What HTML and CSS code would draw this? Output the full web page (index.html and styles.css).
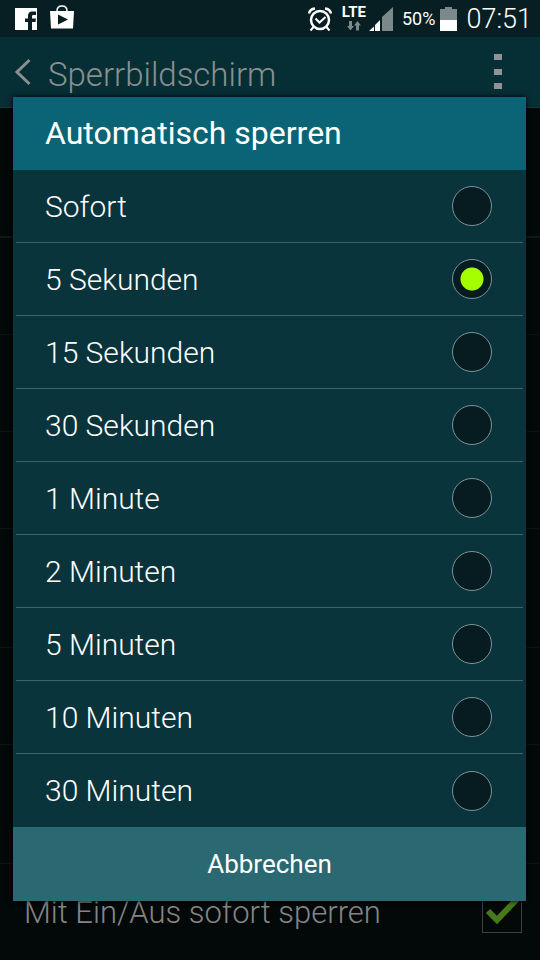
FILE: index.html
```
<!DOCTYPE html>
<html lang="de">
<head>
  <meta charset="UTF-8" />
  <meta name="viewport" content="width=device-width, initial-scale=1" />
  <title>Sperrbildschirm</title>
  <link rel="stylesheet" href="styles.css">
</head>
<body>
  <div class="status-bar">
    <svg width="22" height="22" viewBox="0 0 22 22">
      <path fill="#fff" d="M0 0h22v22h-5v-8h3.500l.5-3.500H17V8q0-1 1.500-1H21V3.500h-4q-4 0-4 4.500v2.500h-3V14h3v8H0z"/>
    </svg>
    <svg class="store" width="24" height="24" viewBox="0 0 24 24">
      <path fill="none" stroke="#fff" stroke-width="1.500" d="M7 6Q7 1 12 1t5 5"/>
      <path fill="#fff" fill-rule="evenodd" d="M0 6h24l-1 17.500H1zM8 9.500v10l10-5z"/>
    </svg>
    <div class="status-right">
      <svg width="26" height="26" viewBox="0 0 26 26" fill="none" stroke="#fff">
        <circle cx="13" cy="14" r="9" stroke-width="2.500"/>
        <path stroke-width="2" d="M8.500 12.500l4 4 6-5.500M6.500 21l-3 3.500M19.500 21l3 3.500"/>
        <path stroke-width="2.500" d="M2 7.500Q3 3 8 2.500M18 2.500q5 .5 6 5"/>
      </svg>
      <div class="network">
        <span>LTE</span>
        <svg width="14" height="10" viewBox="0 0 14 10" fill="#7b898b">
          <path d="M2 0h3v5h2l-3.500 4.500L0 5h2zM9 9.500h3v-5h2L10.500 0 7 4.500h2z"/>
        </svg>
      </div>
      <svg class="signal" width="24" height="24" viewBox="0 0 24 24">
        <path fill="#7b898b" d="M13 24V10L24 0v24z"/>
        <path fill="#fff" d="M0 24l5-4.500V24zM6 24v-6l5-5v11z"/>
      </svg>
      <span class="percent">50%</span>
      <svg class="battery" width="17" height="24" viewBox="0 0 17 24">
        <path fill="#7b898b" d="M5 0h7v2h5v11H0V2h5z"/>
        <path fill="#fff" d="M0 13h17v11H0z"/>
      </svg>
      <span class="clock">07:51</span>
    </div>
  </div>

  <header class="app-bar">
    <a href="#" class="back" aria-label="Zurück">
      <svg width="18" height="28" viewBox="0 0 18 28">
        <path fill="none" stroke="#8a8f90" stroke-width="3" d="M15.500 2L3 14l12.500 12"/>
      </svg>
    </a>
    <h1>Sperrbildschirm</h1>
    <button class="menu" aria-label="Menü">
      <svg width="8" height="36" viewBox="0 0 8 36" fill="#8f9394">
        <path d="M0 0h8v6H0zM0 15h8v6H0zM0 29h8v6H0z"/>
      </svg>
    </button>
  </header>

  <main class="settings">
    <div class="setting tall"></div>
    <div class="setting"></div>
    <div class="setting"></div>
    <div class="setting"></div>
    <div class="setting medium"></div>
    <div class="setting"></div>
    <div class="setting medium"></div>
    <label class="setting last">
      <span>Mit Ein/Aus sofort sperren</span>
      <span class="check">
        <input type="checkbox" checked>
        <svg width="40" height="40" viewBox="0 0 40 40">
          <path fill="none" stroke="#47791a" stroke-width="6" d="M6 18l9 9L36 5"/>
        </svg>
      </span>
    </label>
  </main>

  <form class="dialog" role="dialog" aria-labelledby="dialog-title">
    <h2 id="dialog-title">Automatisch sperren</h2>
    <div class="options">
      <label><span>Sofort</span><input type="radio" name="sperren" value="0"></label>
      <label><span>5 Sekunden</span><input type="radio" name="sperren" value="5" checked></label>
      <label><span>15 Sekunden</span><input type="radio" name="sperren" value="15"></label>
      <label><span>30 Sekunden</span><input type="radio" name="sperren" value="30"></label>
      <label><span>1 Minute</span><input type="radio" name="sperren" value="60"></label>
      <label><span>2 Minuten</span><input type="radio" name="sperren" value="120"></label>
      <label><span>5 Minuten</span><input type="radio" name="sperren" value="300"></label>
      <label><span>10 Minuten</span><input type="radio" name="sperren" value="600"></label>
      <label><span>30 Minuten</span><input type="radio" name="sperren" value="1800"></label>
    </div>
    <button type="button" class="cancel">Abbrechen</button>
  </form>
</body>
</html>
```
FILE: styles.css
```
* {
  box-sizing: border-box;
}

body {
  margin: 0;
  min-height: 100vh;
  display: flex;
  flex-direction: column;
  position: relative;
  font-family: Roboto, sans-serif;
  font-weight: 300;
  background-color: #030808;
  color: #fff;
}

svg {
  display: block;
  flex: none;
}

.status-bar {
  display: flex;
  align-items: center;
  height: 37px;
  padding: 0 8px 0 15px;
  background-color: #071e22;
}

.store {
  margin: 0 0 4px 13px;
}

.status-right {
  display: flex;
  align-items: center;
  margin-left: auto;
}

.network {
  display: flex;
  flex-direction: column;
  align-items: center;
  gap: 3px;
  margin: 0 3px 0 9px;
  font-size: 15px;
  font-weight: 700;
  line-height: 12px;
}

.percent {
  margin: 0 5px 0 9px;
  font-size: 18px;
  font-weight: 400;
}

.clock {
  margin-left: 9px;
  font-size: 27px;
}

.app-bar {
  display: flex;
  align-items: center;
  height: 71px;
  padding: 0 38px 0 14px;
  background-color: #062e35;
  border-bottom: 1px solid #16383c;
}

.app-bar h1 {
  margin: 4px 0 0 16px;
  font-size: 33px;
  font-weight: 300;
  color: #8a8f90;
}

.menu {
  margin-left: auto;
  padding: 0;
  border: none;
  background: none;
}

.settings {
  flex: 1;
  display: flex;
  flex-direction: column;
}

.setting {
  height: 97px;
  border-bottom: 1px solid #0b1415;
}

.setting.tall {
  height: 130px;
  border-bottom: 2px solid #0c1a1e;
}

.setting.medium {
  height: 119px;
}

.setting.last {
  display: flex;
  align-items: center;
  justify-content: space-between;
  padding: 0 18px 0 24px;
  border-bottom: none;
  font-size: 31px;
  color: #858585;
}

.check {
  position: relative;
}

.check input {
  appearance: none;
  display: block;
  width: 40px;
  height: 40px;
  margin: 0;
  border: 1px solid #3c4040;
}

.check svg {
  position: absolute;
  top: 0;
  left: 0;
}

.dialog {
  position: absolute;
  top: 97px;
  left: 13px;
  right: 14px;
  background-color: #09343b;
  box-shadow: 0 0 5px #000;
}

.dialog h2 {
  margin: 0;
  padding: 0 32px;
  font-size: 32px;
  font-weight: 400;
  line-height: 73px;
  background-color: #0a6475;
}

.options {
  padding: 0 3px;
}

.options label {
  display: flex;
  align-items: center;
  justify-content: space-between;
  height: 73px;
  padding: 0 31px 0 29px;
  border-bottom: 1px solid #3a666b;
  font-size: 30px;
}

.options label:last-child {
  border-bottom: none;
}

.options input {
  appearance: none;
  width: 40px;
  height: 40px;
  margin: 0;
  border: 1px solid #7d9496;
  border-radius: 50%;
  background-color: #071c21;
}

.options input:checked {
  background-image: radial-gradient(circle, #a6ff00 11px, transparent 12px);
}

.cancel {
  display: block;
  width: 100%;
  height: 74px;
  padding: 0;
  border: none;
  background-color: #2a6872;
  color: #fff;
  font-family: inherit;
  font-size: 26px;
  font-weight: 400;
}
```
